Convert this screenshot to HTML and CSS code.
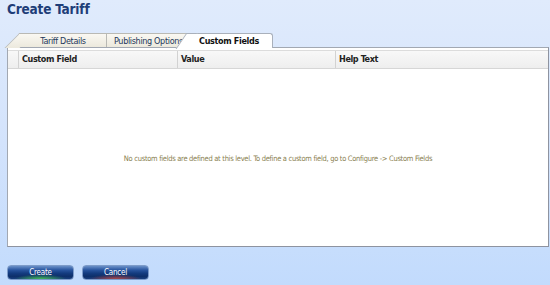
FILE: index.html
```html
<!DOCTYPE html>
<html>
<head>
<meta charset="utf-8">
<link rel="stylesheet" href="styles.css">
</head>
<body>
<div class="page">
  <h1 class="title">Create Tariff</h1>
  <div class="tabs">
    <div class="tab tab-first">Tariff Details</div>
    <div class="tab tab-mid">Publishing Options</div>
    <div class="tab tab-active">Custom Fields</div>
  </div>
  <div class="panel">
    <div class="grid-head">
      <div class="col col-sel"></div>
      <div class="col col-field">Custom Field</div>
      <div class="col col-value">Value</div>
      <div class="col col-help">Help Text</div>
    </div>
    <div class="grid-body">
      <p class="empty">No custom fields are defined at this level. To define a custom field, go to Configure -&gt; Custom Fields</p>
    </div>
  </div>
  <div class="actions">
    <button class="btn btn-create">Create</button>
    <button class="btn btn-cancel">Cancel</button>
  </div>
</div>
</body>
</html>
```

FILE: styles.css
```css
html, body {
  margin: 0;
  padding: 0;
  height: 100%;
}
body {
  background: linear-gradient(180deg, #e0ebfc 0%, #d3e3fc 50%, #c2dbfd 100%);
  font-family: "DejaVu Sans Condensed", "DejaVu Sans", "Liberation Sans", sans-serif;
  overflow: hidden;
}
.page {
  padding: 0 1px 0 7px;
  display: flex;
  flex-direction: column;
}
.title {
  margin: 0;
  height: 18px;
  line-height: 18px;
  font-size: 13.5px;
  font-weight: bold;
  color: #1e3d78;
  letter-spacing: -0.2px;
}
.tabs {
  display: flex;
  height: 14px;
  margin: 15px 0 0 5px;
  position: relative;
  z-index: 2;
}
.tab {
  position: relative;
  height: 13px;
  line-height: 14px;
  font-size: 9px;
  letter-spacing: -0.35px;
  color: #23375a;
  background: linear-gradient(180deg, #faf8f2 0%, #ece9dd 100%);
  border-top: 1px solid #b9b9b4;
  border-right: 1px solid #b9b9b4;
  white-space: nowrap;
  box-sizing: content-box;
}
.tab-first {
  width: 86px;
  margin-left: 7px;
  text-align: center;
  padding-left: 1px;
}
.tab-first::before {
  content: "";
  position: absolute;
  left: -7px;
  top: -1px;
  width: 14px;
  height: 14px;
  background: linear-gradient(180deg, #faf8f2 0%, #ece9dd 100%);
  border-left: 1px solid #b9b9b4;
  border-top: 1px solid #b9b9b4;
  transform: skewX(-45deg);
  z-index: -1;
}
.tab-mid {
  width: 79px;
  padding-left: 7px;
  border-right: none;
}
.tab-active {
  width: 86px;
  margin-left: -7px;
  height: 14px;
  text-align: center;
  font-weight: bold;
  color: #111;
  background: #fff;
  border-top: 1px solid #a9b0bb;
  border-right: 1px solid #a9b0bb;
  border-top-right-radius: 3px;
  z-index: 3;
}
.tab-active::before {
  content: "";
  position: absolute;
  left: -5px;
  top: -1px;
  width: 10px;
  height: 15px;
  background: #fff;
  border-left: 1px solid #a9b0bb;
  border-top: 1px solid #a9b0bb;
  transform: skewX(-34deg);
  z-index: -1;
}
.panel {
  height: 198px;
  border: 1px solid #a2a8b2;
  border-right-color: #8e93a0;
  border-bottom-color: #8e93a0;
  background: #fff;
  display: flex;
  flex-direction: column;
  position: relative;
  z-index: 1;
}
.grid-head {
  display: flex;
  height: 17px;
  margin-top: 2px;
  border-top: 1px solid #dcdcdc;
  border-bottom: 1px solid #d6d6d6;
  background: linear-gradient(180deg, #f8f8f8 0%, #eeeeee 100%);
}
.col {
  font-size: 9px;
  letter-spacing: -0.4px;
  font-weight: bold;
  color: #222;
  line-height: 17px;
  padding-left: 3px;
  border-right: 1px solid #d2d2d2;
  box-sizing: border-box;
}
.col-sel { width: 11px; padding: 0; }
.col-field { width: 159px; }
.col-value { width: 158px; }
.col-help { flex: 1; border-right: none; }
.grid-body {
  flex: 1;
  display: flex;
  align-items: center;
  justify-content: center;
}
.empty {
  margin: 0;
  padding-top: 1px;
  font-size: 7.5px;
  letter-spacing: -0.3px;
  color: #8a7f52;
}
.actions {
  display: flex;
  gap: 8px;
  margin-top: 18px;
}
.btn {
  width: 67px;
  height: 15px;
  padding: 0;
  border: 1px solid #7d9bc9;
  border-radius: 4px;
  font-family: inherit;
  font-size: 8px;
  letter-spacing: -0.2px;
  line-height: 13px;
  color: #fff;
  cursor: pointer;
}
.btn-create {
  background:
    radial-gradient(ellipse 40% 35% at 50% 100%, rgba(70, 200, 80, 0.9) 0%, rgba(70, 200, 80, 0) 100%),
    linear-gradient(180deg, #6a90c8 0%, #2a56a0 30%, #143c80 55%, #0d2f6a 80%, #1a3f7e 100%);
}
.btn-cancel {
  background:
    radial-gradient(ellipse 40% 35% at 50% 100%, rgba(200, 70, 60, 0.85) 0%, rgba(200, 70, 60, 0) 100%),
    linear-gradient(180deg, #6a90c8 0%, #2a56a0 30%, #143c80 55%, #0d2f6a 80%, #1a3f7e 100%);
}
```
